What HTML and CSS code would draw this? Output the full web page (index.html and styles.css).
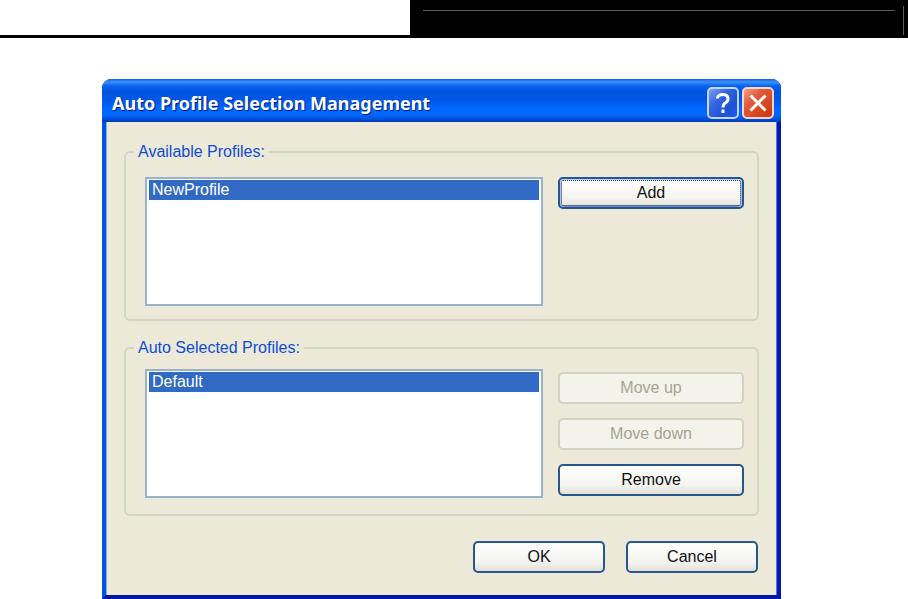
FILE: index.html
```
<!DOCTYPE html>
<html lang="en">
<head>
	<meta charset="utf-8">
	<meta name="viewport" content="width=device-width, initial-scale=1">
	<title>Auto Profile Selection Management</title>
	<link rel="stylesheet" href="styles.css">
</head>
<body>
	<header class="page-header">
		<div class="banner">
			<div class="banner-line"></div>
			<div class="banner-edge"></div>
		</div>
	</header>

	<main class="dialog">
		<div class="titlebar">
			<h1>Auto Profile Selection Management</h1>
			<button class="caption-btn help" type="button" aria-label="Help">
				<svg viewBox="0 0 28 28" fill="none" stroke="#fff" stroke-width="3">
					<path d="M8.5 9.5V8.5Q9.5 5.5 14 5.5Q19 5.5 19 10Q19 12.3 16.5 13.8Q14 15.2 14 18.5"/>
					<path d="M14 20.5V24"/>
				</svg>
			</button>
			<button class="caption-btn close" type="button" aria-label="Close">
				<svg viewBox="0 0 28 28" fill="none" stroke="#fff" stroke-width="3">
					<path d="M6.5 6.5L21.5 21.5M21.5 6.5L6.5 21.5"/>
				</svg>
			</button>
		</div>

		<form class="dialog-body">
			<fieldset class="group">
				<legend><label for="available">Available Profiles:</label></legend>
				<div class="group-row">
					<select class="list" id="available" size="6">
						<option selected>NewProfile</option>
					</select>
					<div class="actions">
						<button class="btn default" type="button">Add</button>
					</div>
				</div>
			</fieldset>

			<fieldset class="group selected-group">
				<legend><label for="autoSelected">Auto Selected Profiles:</label></legend>
				<div class="group-row">
					<select class="list" id="autoSelected" size="6">
						<option selected>Default</option>
					</select>
					<div class="actions centered">
						<button class="btn" type="button" disabled>Move up</button>
						<button class="btn" type="button" disabled>Move down</button>
						<button class="btn" type="button">Remove</button>
					</div>
				</div>
			</fieldset>

			<div class="footer">
				<button class="btn" type="button">OK</button>
				<button class="btn" type="button">Cancel</button>
			</div>
		</form>
	</main>
</body>
</html>
```
FILE: styles.css
```
* {
	box-sizing: border-box;
	margin: 0;
	padding: 0;
}

body {
	background: #fff;
	font-family: "Liberation Sans", Arial, sans-serif;
	font-size: 16px;
	line-height: 20px;
}

/* Page header */
.page-header {
	display: flex;
	height: 38px;
	padding-left: 410px;
	border-bottom: 3px solid #000;
}

.banner {
	display: flex;
	flex: 1;
	gap: 8px;
	padding: 6px 4px 0 13px;
	background: #000;
}

.banner-line {
	flex: 1;
	margin-top: 4px;
	border-top: 1px solid #5c5c5c;
}

.banner-edge {
	border-left: 1px solid #5c5c5c;
}

/* Dialog window */
.dialog {
	margin: 41px 127px 0 102px;
	border: 4px solid #0054e3;
	border-top: none;
	border-right-color: #0018a8;
	border-bottom-color: #0018a8;
	border-radius: 9px 9px 0 0;
	background: #0054e3;
}

.titlebar {
	display: flex;
	align-items: center;
	gap: 3px;
	height: 43px;
	margin: 0 -4px;
	padding: 4px 7px 0 10px;
	border-radius: 9px 9px 0 0;
	background: linear-gradient(#1460e0 0, #3a92ff 3px, #0a62ee 7px, #0053dd 13px, #0058ea 22px, #0068ff 30px, #0068ff 36px, #0050dd 40px, #0038b4 43px);
}

.titlebar h1 {
	flex: 1;
	color: #fff;
	font-family: "Noto Sans", "Open Sans", sans-serif;
	font-size: 18px;
	font-weight: bold;
	text-shadow: 1px 1px 1px #001a80;
}

.caption-btn {
	width: 32px;
	height: 32px;
	border: 2px solid #c3d5fb;
	border-radius: 5px;
	background: linear-gradient(135deg, #7d9ff5, #3566e0 35%, #1f52d4 70%, #1a5cf0);
}

.caption-btn.close {
	border-color: #f4d5d0;
	background: linear-gradient(135deg, #f0a088, #e05a3a 35%, #d84420 70%, #c83808);
}

.caption-btn svg {
	display: block;
	width: 28px;
	height: 28px;
}

.dialog-body {
	padding: 20px 17px 22px;
	border-left: 1px solid #8fa9e0;
	border-right: 1px solid #3f7af0;
	background: #ece9d8;
}

/* Group boxes */
.group {
	padding: 15px 13px 13px 19px;
	border: 2px solid #d5d5c3;
	border-radius: 6px;
}

.selected-group {
	margin-top: 17px;
	padding-top: 11px;
	padding-bottom: 16px;
}

legend {
	margin-left: -11px;
	padding: 0 4px;
	color: #0f4cd8;
}

.group-row {
	display: flex;
	gap: 15px;
}

.list {
	flex: 1;
	height: 129px;
	padding: 1px 2px;
	overflow: hidden;
	border: 2px solid #9ab3cc;
	border-radius: 0;
	outline: none;
	background: #fff;
	font: inherit;
}

.list option {
	min-height: 20px;
	padding: 1px 3px 0;
}

.list option:checked {
	background: linear-gradient(#316ac5, #316ac5);
	-webkit-text-fill-color: #fff;
}

.actions {
	display: flex;
	flex-direction: column;
	gap: 14px;
	width: 186px;
}

.actions.centered {
	justify-content: center;
}

/* Buttons */
.btn {
	height: 32px;
	border: 2px solid #25578f;
	border-radius: 5px;
	background: linear-gradient(#fff, #f3f3ef 70%, #e2dfd6);
	color: #111;
	font: inherit;
}

.btn.default {
	outline: 1px dotted #444;
	outline-offset: -4px;
	box-shadow: inset 0 2px #c6d8f8, inset 2px 0 #a9c2ee, inset -2px 0 #a9c2ee, inset 0 -2px #6c8fdc;
}

.btn:disabled {
	border-color: #d3d1c1;
	background: #f4f3e9;
	color: #a5a493;
}

.footer {
	display: flex;
	justify-content: flex-end;
	gap: 21px;
	margin-top: 25px;
	padding-right: 1px;
}

.footer .btn {
	width: 132px;
}
```
